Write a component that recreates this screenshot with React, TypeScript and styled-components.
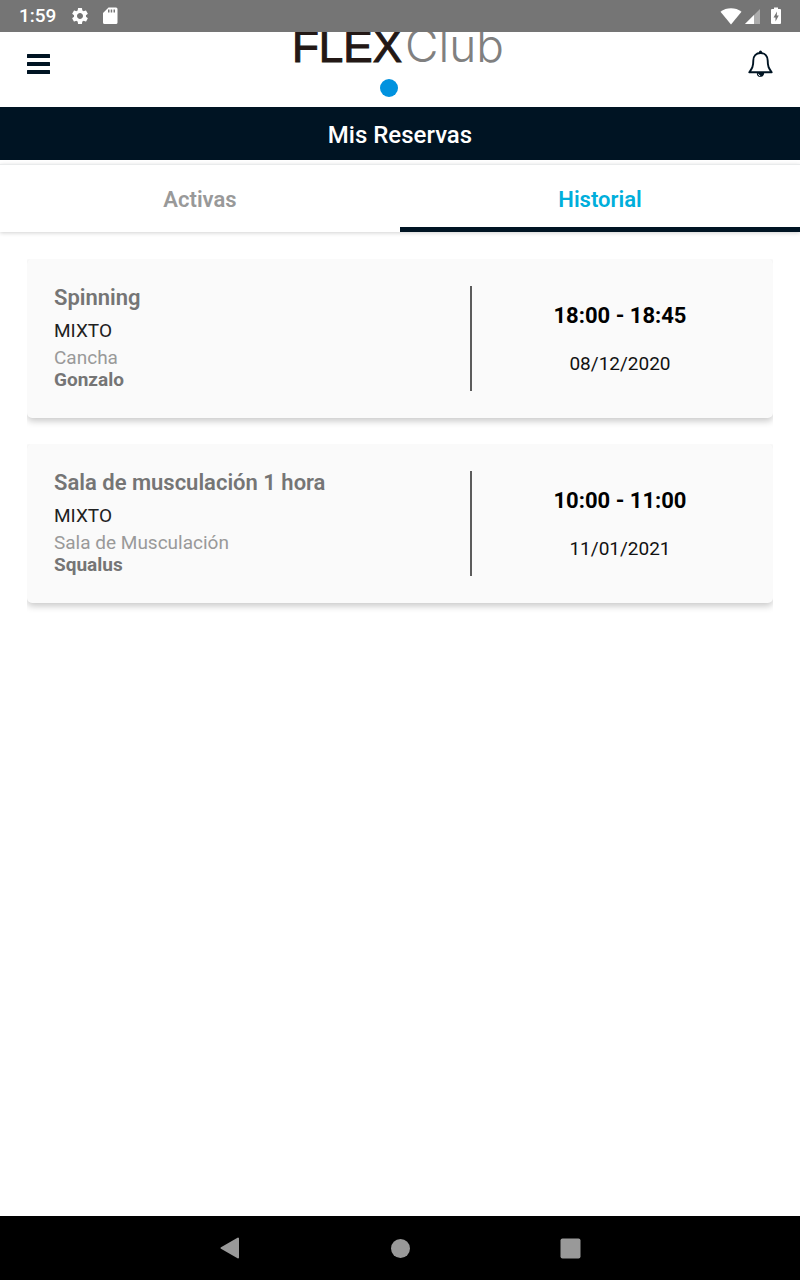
import React from "react";
import styled, { createGlobalStyle } from "styled-components";
import { MdSettings } from "react-icons/md";

const navy = "#001423";

const GlobalStyle = createGlobalStyle`
  *, *::before, *::after { box-sizing: border-box; }
  body { margin: 0; background: #fff; font-family: Roboto, sans-serif; }
  h1, h2, p { margin: 0; }
  button { border: 0; padding: 0; background: none; font: inherit; cursor: pointer; }
`;

const Screen = styled.div`
  min-height: 100vh;
  display: flex;
  flex-direction: column;
`;

const StatusBar = styled.div`
  position: relative;
  z-index: 1;
  height: 32px;
  padding: 0 19px;
  display: flex;
  align-items: center;
  justify-content: space-between;
  background: #757575;
  color: #fff;
`;

const StatusGroup = styled.div<{ $gap: number }>`
  display: flex;
  align-items: center;
  gap: ${({ $gap }) => $gap}px;
  svg { display: block; }
`;

const Clock = styled.time`
  min-width: 38px;
  font-size: 19px;
  line-height: 32px;
  font-weight: 500;
`;

const Header = styled.header`
  height: 75px;
  padding: 0 27px;
  display: grid;
  grid-template-columns: 1fr auto 1fr;
`;

const IconButton = styled.button<{ $end?: boolean }>`
  height: 64px;
  width: 26px;
  display: flex;
  align-items: center;
  justify-content: ${({ $end }) => ($end ? "flex-end" : "flex-start")};
  justify-self: ${({ $end }) => ($end ? "end" : "start")};
  color: ${navy};
  svg { flex: none; }
`;

const Brand = styled.div`
  height: 75px;
  display: flex;
  flex-direction: column;
  align-items: center;
  justify-content: flex-end;
  padding: 0 0 10px;
`;

const Wordmark = styled.div`
  padding-right: 4px;
  display: flex;
  align-items: baseline;
  gap: 3px;
  font-family: "Liberation Sans", Arial, sans-serif;
  font-size: 44px;
  line-height: 44px;
  color: #231815;
  -webkit-text-stroke: 1px #231815;
  white-space: nowrap;
`;

const WordmarkLight = styled.span`
  font-family: Inter, sans-serif;
  font-size: 46px;
  font-weight: 300;
  color: #808080;
  -webkit-text-stroke: 0;
`;

const Dot = styled.span`
  width: 18px;
  height: 18px;
  flex: none;
  margin: 10px 22px 0 0;
  border-radius: 50%;
  background: #0092df;
`;

const TitleBand = styled.h1`
  padding: 14px 0 11px;
  background: ${navy};
  color: #fff;
  font-size: 24px;
  line-height: 28px;
  font-weight: 500;
  text-align: center;
`;

const Tabs = styled.div`
  margin-top: 4px;
  display: flex;
  border-top: 1px solid #e9ebec;
  box-shadow: 0 1px 4px rgba(0, 0, 0, 0.18);
`;

const Tab = styled.button<{ $active?: boolean }>`
  && {
    flex: 1;
    height: 67px;
    padding-top: 8px;
    border-bottom: 5px solid ${({ $active }) => ($active ? navy : "transparent")};
    color: ${({ $active }) => ($active ? "#00aedb" : "#999")};
    font-size: 22px;
    line-height: 24px;
    font-weight: 600;
  }
`;

const List = styled.main`
  flex: 1;
  padding: 27px;
  display: flex;
  flex-direction: column;
  gap: 26px;
`;

const Card = styled.article`
  padding: 27px;
  display: grid;
  grid-template-columns: 1fr 276px;
  border-radius: 5px;
  background: #fafafa;
  box-shadow: 0 3px 7px rgba(0, 0, 0, 0.22);
  clip-path: inset(0 0 -12px 0);
`;

const Activity = styled.h2`
  margin-bottom: 10px;
  color: #757575;
  font-size: 22px;
  line-height: 24px;
  font-weight: 600;
`;

const Detail = styled.p<{ $color: string; $bold?: boolean; $spaced?: boolean }>`
  margin-bottom: ${({ $spaced }) => ($spaced ? 5 : 0)}px;
  color: ${({ $color }) => $color};
  font-size: 19px;
  line-height: 22px;
  font-weight: ${({ $bold }) => ($bold ? 700 : 400)};
`;

const Schedule = styled.div`
  padding: 2px 0 0 22px;
  border-left: 2px solid #5c5c5c;
  display: flex;
  flex-direction: column;
  align-items: center;
  justify-content: center;
  gap: 25px;
`;

const Hours = styled.p`
  color: #000;
  font-size: 22px;
  line-height: 24px;
  font-weight: 700;
`;

const NavBar = styled.nav`
  height: 64px;
  display: flex;
  justify-content: center;
  background: #000;
`;

const NavButton = styled.button`
  width: 170px;
  display: flex;
  align-items: center;
  justify-content: center;
`;

const reservations = [
  { activity: "Spinning", kind: "MIXTO", room: "Cancha", coach: "Gonzalo", hours: "18:00 - 18:45", date: "08/12/2020" },
  { activity: "Sala de musculación 1 hora", kind: "MIXTO", room: "Sala de Musculación", coach: "Squalus", hours: "10:00 - 11:00", date: "11/01/2021" },
];

export default function App() {
  return (
    <Screen>
      <GlobalStyle />
      <StatusBar>
        <StatusGroup $gap={13}>
          <Clock>1:59</Clock>
          <MdSettings size={20} />
          <svg width="16" height="18" viewBox="0 0 16 18">
            <path fillRule="evenodd" fill="#fff" d="M5.500.5h7.500a1.500 1.500 0 0 1 1.500 1.500v13.500a1.500 1.500 0 0 1-1.500 1.500h-11.500a1.500 1.500 0 0 1-1.500-1.500v-9.500zM5 2.500v3h1.500v-3zM7.700 2.500v3h1.500v-3zM10.500 2.500v3h1.500v-3z" />
          </svg>
        </StatusGroup>
        <StatusGroup $gap={3}>
          <svg width="22" height="17" viewBox="0 0 22 17">
            <path fill="#fff" d="M.5 3.800C6.500-.8 15.500-.8 21.500 3.800L11 16.500z" />
          </svg>
          <svg width="23" height="17" viewBox="0 0 23 17">
            <path fill="#fff" fillOpacity=".4" d="M15 1v15h-15z" />
            <path fill="#fff" d="M9 7v9h-9z" />
          </svg>
          <svg width="10" height="18" viewBox="0 0 10 18">
            <path fill="#fff" d="M3 .500h4v1.500h2a1 1 0 0 1 1 1v13a1 1 0 0 1-1 1h-8a1 1 0 0 1-1-1v-13a1 1 0 0 1 1-1h2z" />
            <path fill="#757575" d="M6 4.500L2.500 10.500h2v4L7.800 8.500h-2z" />
          </svg>
        </StatusGroup>
      </StatusBar>
      <Header>
        <IconButton aria-label="Menú">
          <svg width="23" height="20" viewBox="0 0 23 20">
            <path fill={navy} d="M.5 0h22a.5.5 0 0 1 .5.5v3a.5.5 0 0 1-.5.5h-22a.5.5 0 0 1-.5-.5v-3a.5.5 0 0 1 .5-.5zM.5 8h22a.5.5 0 0 1 .5.5v3a.5.5 0 0 1-.5.5h-22a.5.5 0 0 1-.5-.5v-3a.5.5 0 0 1 .5-.5zM.5 16h22a.5.5 0 0 1 .5.5v3a.5.5 0 0 1-.5.5h-22a.5.5 0 0 1-.5-.5v-3a.5.5 0 0 1 .5-.5z" />
          </svg>
        </IconButton>
        <Brand>
          <Wordmark>
            FLEX<WordmarkLight>Club</WordmarkLight>
          </Wordmark>
          <Dot />
        </Brand>
        <IconButton $end aria-label="Notificaciones">
          <svg width="26" height="28" viewBox="0 0 26 28">
            <path fill="none" stroke={navy} strokeWidth="1.900" strokeLinejoin="round" d="M13.500 3C9 3 6.300 6 6.300 10.500C6.300 17 5 18.500 2.300 22.300H24.700C22 18.500 20.700 17 20.700 10.500C20.700 6 18 3 13.500 3z" />
            <path fill={navy} d="M12 3.200V2a1.500 1.500 0 0 1 3 0v1.200zM9.800 23h7.400a3.700 3.900 0 0 1-7.400 0z" />
            <path fill="none" stroke="#fff" strokeWidth=".9" d="M11.300 23.800q.4 1.800 2 2.200" />
          </svg>
        </IconButton>
      </Header>
      <TitleBand>Mis Reservas</TitleBand>
      <Tabs role="tablist">
        <Tab role="tab" aria-selected={false}>Activas</Tab>
        <Tab role="tab" aria-selected $active>Historial</Tab>
      </Tabs>
      <List>
        {reservations.map((r) => (
          <Card key={r.activity}>
            <div>
              <Activity>{r.activity}</Activity>
              <Detail $color="#212121" $spaced>{r.kind}</Detail>
              <Detail $color="#999">{r.room}</Detail>
              <Detail $color="#757575" $bold>{r.coach}</Detail>
            </div>
            <Schedule>
              <Hours>{r.hours}</Hours>
              <Detail $color="#111">{r.date}</Detail>
            </Schedule>
          </Card>
        ))}
      </List>
      <NavBar>
        <NavButton aria-label="Atrás">
          <svg width="20" height="22" viewBox="0 0 20 22">
            <path fill="#999" stroke="#999" strokeWidth="2" strokeLinejoin="round" d="M18 1.500v19L1.500 11z" />
          </svg>
        </NavButton>
        <NavButton aria-label="Inicio">
          <svg width="20" height="20" viewBox="0 0 20 20"><circle cx="10.500" cy="10.500" r="9.500" fill="#999" /></svg>
        </NavButton>
        <NavButton aria-label="Recientes">
          <svg width="21" height="21" viewBox="0 0 21 21"><rect x=".5" y=".5" width="20" height="20" rx="2" fill="#999" /></svg>
        </NavButton>
      </NavBar>
    </Screen>
  );
}
